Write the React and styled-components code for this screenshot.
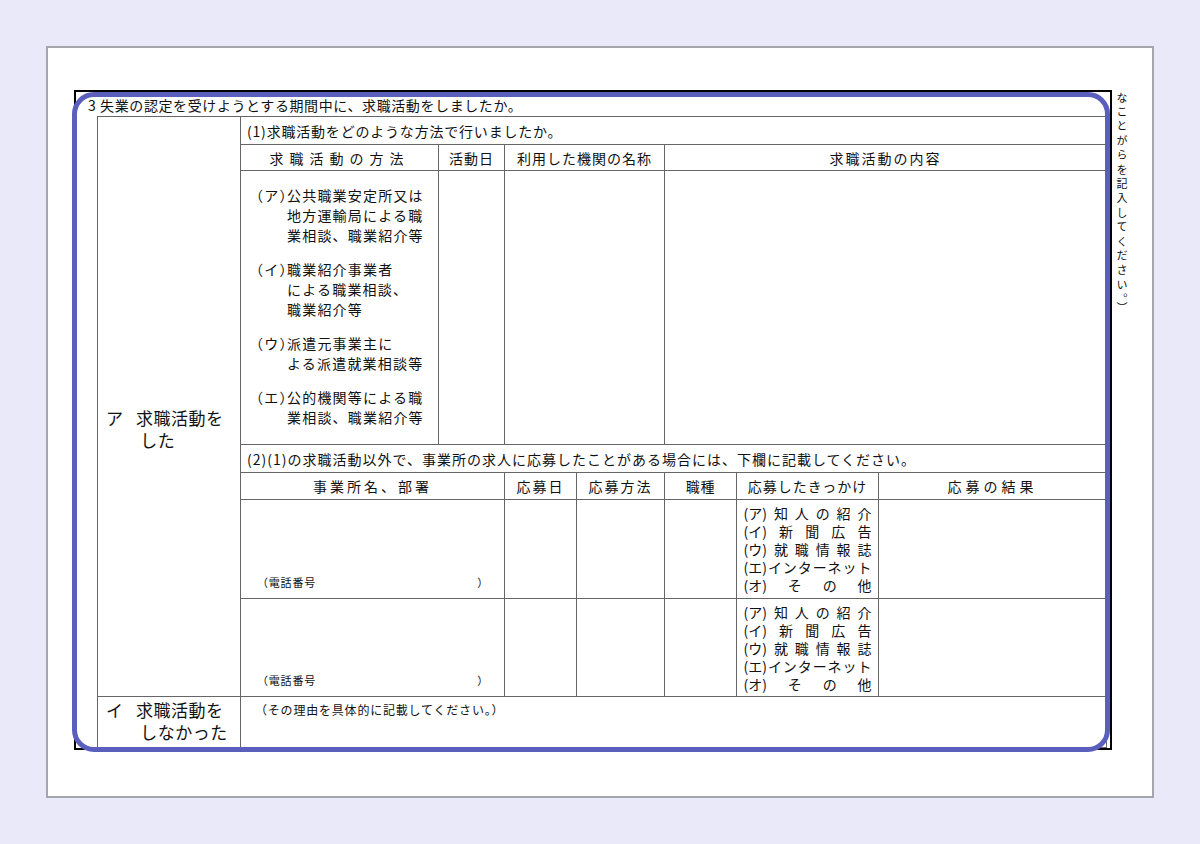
import React from 'react';
import styled, { createGlobalStyle } from 'styled-components';

const Global = createGlobalStyle`
  body { margin: 0; background: #e9e9f9; font-family: "Noto Sans CJK JP", "Liberation Sans", sans-serif; color: #111; }
`;

const Page = styled.div`
  width: 1200px;
  height: 844px;
  padding: 46px;
  box-sizing: border-box;
`;

const Paper = styled.div`
  position: relative;
  height: 752px;
  background: #fff;
  border: 2px solid #a5a5ad;
  box-sizing: border-box;
  padding: 42px 40px 0 26px;
  display: flex;
`;

const Form = styled.div`
  position: relative;
  width: 1038px;
  height: 660px;
  border: 2px solid #000;
  box-sizing: border-box;
  display: flex;
  flex-direction: column;
`;

const Frame = styled.div`
  position: absolute;
  left: -4px;
  top: 0px;
  right: 0px;
  bottom: -4px;
  border: 5px solid #5a5fbe;
  border-radius: 22px;
  pointer-events: none;
`;

const Title = styled.div`
  font-size: 14px;
  letter-spacing: 0.6px;
  height: 22px;
  line-height: 22px;
  padding-left: 12px;
  padding-top: 2px;
`;

const Grid = styled.div`
  margin-left: 21px;
  display: grid;
  grid-template-columns: 143px 198px 66px 72px 88px 72px 142px 228px;
  grid-template-rows: 28px 26px 274px 28px 27px 99px 98px 1fr;
  flex: 1;
  border-top: 1px solid #666;
  border-left: 1px solid #666;
`;

const Cell = styled.div`
  border-right: 1px solid #666;
  border-bottom: 1px solid #666;
  font-size: ${p => p.$size || 14}px;
  letter-spacing: ${p => p.$ls ?? 0.8}px;
  display: flex;
  align-items: ${p => p.$align || 'center'};
  justify-content: ${p => p.$justify || 'center'};
  padding: ${p => p.$pad || '0'};
  grid-column: ${p => p.$col || 'auto'};
  grid-row: ${p => p.$row || 'auto'};
  box-sizing: border-box;
  white-space: nowrap;
`;

const SideLabel = styled.div`
  font-size: 17px;
  line-height: 22px;
  letter-spacing: 0.5px;
  display: grid;
  grid-template-columns: 30px auto;
`;

const Methods = styled.div`
  display: flex;
  flex-direction: column;
  gap: 14px;
  padding: 14px 0 0 8px;
  font-size: 14px;
  letter-spacing: 1.2px;
  line-height: 20px;
`;

const Method = styled.div`
  display: grid;
  grid-template-columns: 38px auto;
`;

const MethodText = styled.span`
  white-space: pre;
`;

const Triggers = styled.div`
  font-size: 14px;
  line-height: 18px;
  letter-spacing: 0;
  width: 128px;
`;

const Trigger = styled.div`
  display: flex;
  justify-content: space-between;
`;

const Phone = styled.div`
  display: flex;
  justify-content: space-between;
  width: 232px;
  font-size: 11px;
  padding-bottom: 8px;
`;

const Vertical = styled.div`
  position: absolute;
  left: 1066px;
  top: 44px;
  writing-mode: vertical-rl;
  font-size: 11px;
  letter-spacing: 3.4px;
`;

const methods = [
  ['（ア）', '公共職業安定所又は\n地方運輸局による職\n業相談、職業紹介等'],
  ['（イ）', '職業紹介事業者\nによる職業相談、\n職業紹介等'],
  ['（ウ）', '派遣元事業主に\nよる派遣就業相談等'],
  ['（エ）', '公的機関等による職\n業相談、職業紹介等'],
];

const triggers = [
  ['(ア)', ['知', '人', 'の', '紹', '介']],
  ['(イ)', ['新', '聞', '広', '告']],
  ['(ウ)', ['就', '職', '情', '報', '誌']],
  ['(エ)', ['イ', 'ン', 'タ', 'ー', 'ネ', 'ッ', 'ト']],
  ['(オ)', ['そ', 'の', '他']],
];

const TriggerList = () => (
  <Triggers>
    {triggers.map(([k, chars]) => (
      <Trigger key={k}>
        <span>{k}</span>
        {chars.map((c, i) => <span key={i}>{c}</span>)}
      </Trigger>
    ))}
  </Triggers>
);

export default function App() {
  return (
    <Page>
      <Global />
      <Paper>
        <Form>
          <Title>3 失業の認定を受けようとする期間中に、求職活動をしましたか。</Title>
          <Grid>
            <Cell $row="1 / 8" $col="1" $align="flex-start" $pad="290px 0 0 8px" $justify="flex-start">
              <SideLabel>
                <span>ア</span><span>求職活動を</span>
                <span></span><span>&nbsp;した</span>
              </SideLabel>
            </Cell>
            <Cell $col="2 / 9" $justify="flex-start" $pad="0 0 0 6px">(1)求職活動をどのような方法で行いましたか。</Cell>
            <Cell $ls={6}>求職活動の方法</Cell>
            <Cell $ls={1}>活動日</Cell>
            <Cell $col="4 / 6" $ls={1}>利用した機関の名称</Cell>
            <Cell $col="6 / 9" $ls={2}>求職活動の内容</Cell>
            <Cell $align="flex-start" $justify="flex-start">
              <Methods>
                {methods.map(([k, t]) => (
                  <Method key={k}>
                    <span>{k}</span>
                    <MethodText>{t}</MethodText>
                  </Method>
                ))}
              </Methods>
            </Cell>
            <Cell />
            <Cell $col="4 / 6" />
            <Cell $col="6 / 9" />
            <Cell $col="2 / 9" $justify="flex-start" $pad="0 0 0 6px" $ls={1}>(2)(1)の求職活動以外で、事業所の求人に応募したことがある場合には、下欄に記載してください。</Cell>
            <Cell $col="2 / 4" $ls={3}>事業所名、部署</Cell>
            <Cell $ls={2}>応募日</Cell>
            <Cell $ls={2}>応募方法</Cell>
            <Cell>職種</Cell>
            <Cell $ls={1}>応募したきっかけ</Cell>
            <Cell $ls={4}>応募の結果</Cell>
            {[0, 1].map(i => (
              <React.Fragment key={i}>
                <Cell $col="2 / 4" $align="flex-end" $justify="flex-start" $pad="0 0 0 16px">
                  <Phone><span>（電話番号</span><span>）</span></Phone>
                </Cell>
                <Cell />
                <Cell />
                <Cell />
                <Cell><TriggerList /></Cell>
                <Cell />
              </React.Fragment>
            ))}
            <Cell $col="1" $align="flex-start" $justify="flex-start" $pad="2px 0 0 8px">
              <SideLabel>
                <span>イ</span><span>求職活動を</span>
                <span></span><span>&nbsp;しなかった</span>
              </SideLabel>
            </Cell>
            <Cell $col="2 / 9" $size={12} $align="flex-start" $justify="flex-start" $pad="4px 0 0 14px">（その理由を具体的に記載してください。）</Cell>
          </Grid>
          <Frame />
        </Form>
        <Vertical>なことがらを記入してください。）</Vertical>
      </Paper>
    </Page>
  );
}
